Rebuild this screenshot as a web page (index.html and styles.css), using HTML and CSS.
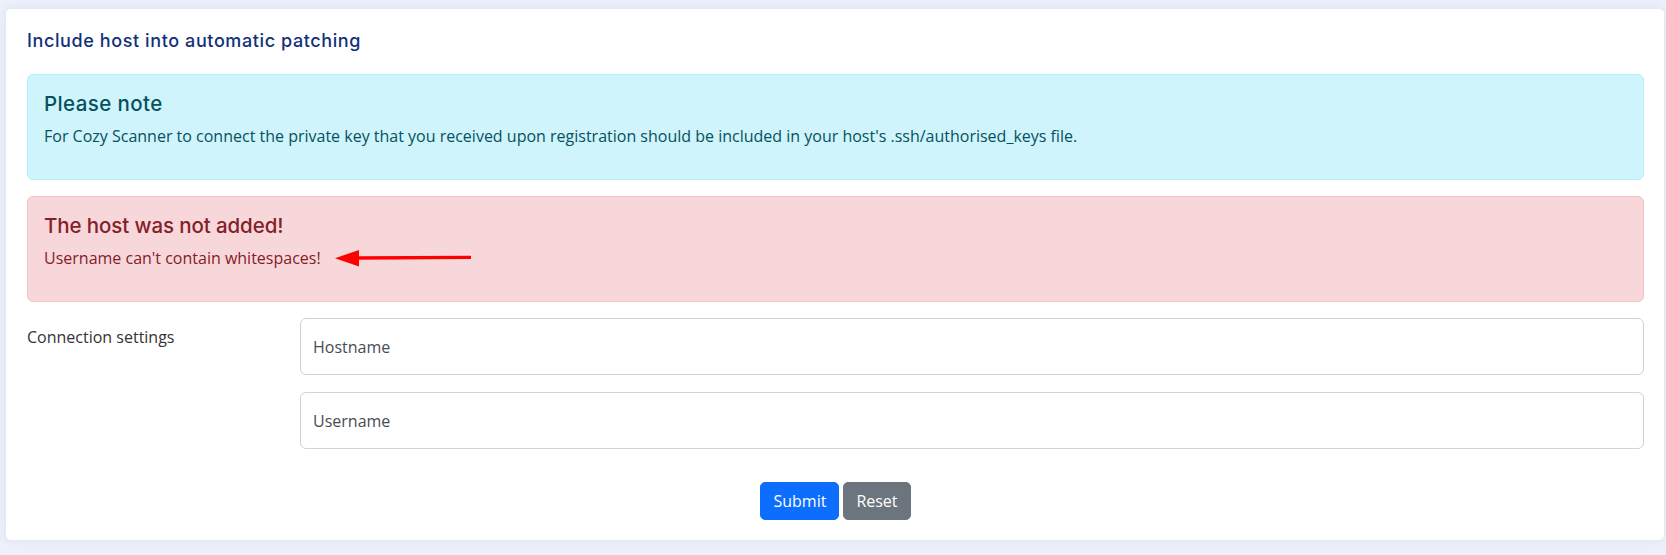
FILE: index.html
```html
<!DOCTYPE html>
<html lang="en">
<head>
<meta charset="utf-8">
<title>Include host into automatic patching</title>
<link rel="stylesheet" href="styles.css">
</head>
<body>
<div class="page">
  <div class="card">
    <h2 class="card-title">Include host into automatic patching</h2>
    <div class="alert alert-info">
      <h5 class="alert-heading">Please note</h5>
      <p class="alert-text">For Cozy Scanner to connect the private key that you received upon registration should be included in your host's .ssh/authorised_keys file.</p>
    </div>
    <div class="alert alert-danger">
      <h5 class="alert-heading">The host was not added!</h5>
      <p class="alert-text">Username can't contain whitespaces!<svg class="arrow" width="136" height="18" viewBox="0 0 136 18"><line x1="20" y1="9" x2="136" y2="8.4" stroke="#ff0000" stroke-width="3.4"/><polygon points="0,9.2 24,1 24,17.4" fill="#ff0000"/></svg></p>
    </div>
    <form class="form-row">
      <label class="form-label">Connection settings</label>
      <div class="fields">
        <input class="form-control" type="text" placeholder="Hostname">
        <input class="form-control" type="text" placeholder="Username">
      </div>
    </form>
    <div class="actions">
      <button class="btn btn-primary" type="button">Submit</button>
      <button class="btn btn-secondary" type="button">Reset</button>
    </div>
  </div>
</div>
</body>
</html>
```

FILE: styles.css
```css
html, body {
  margin: 0;
  padding: 0;
}
body {
  background: #edf1fa;
  font-family: "Open Sans", "Liberation Sans", sans-serif;
  color: #212529;
  height: 555px;
  overflow: hidden;
}
.page {
  padding: 9px 2px 0 6px;
}
.card {
  background: #ffffff;
  border-radius: 5px;
  padding: 20px 20px 20px 21px;
  box-shadow: 0 0 12px rgba(160, 175, 215, 0.25);
}
.card-title {
  font-family: "Inter", "Noto Sans", sans-serif;
  font-weight: 500;
  font-size: 18px;
  line-height: 20px;
  color: #12317a;
  margin: 2px 0 23px 0;
  letter-spacing: 0.6px;
}
.alert {
  border: 1px solid transparent;
  border-radius: 6px;
  padding: 16px 16px 16px 16px;
  margin-bottom: 16px;
}
.alert-info {
  background: #cff4fc;
  border-color: #b6effb;
  color: #055160;
}
.alert-danger {
  background: #f8d7da;
  border-color: #f5c2c7;
  color: #842029;
  margin-bottom: 16px;
}
.alert-heading {
  font-family: "Inter", "Noto Sans", sans-serif;
  font-weight: 500;
  font-size: 20.5px;
  line-height: 26px;
  margin: 0 0 8px 0;
}
.alert-danger .alert-heading {
  letter-spacing: -0.1px;
}
.alert-info .alert-heading {
  letter-spacing: 0.4px;
}
.alert-text {
  font-size: 16px;
  line-height: 22px;
  margin: 0 0 16px 0;
}
.arrow {
  vertical-align: -3px;
  margin-left: 14px;
}
.form-row {
  display: grid;
  grid-template-columns: 273px 1fr;
  margin: 0;
}
.form-label {
  font-size: 16px;
  line-height: 24px;
  color: #333;
  padding-top: 7px;
}
.fields {
  display: flex;
  flex-direction: column;
  gap: 17px;
}
.form-control {
  display: block;
  box-sizing: border-box;
  width: 100%;
  height: 57px;
  padding: 0 12px;
  font-family: "Open Sans", "Liberation Sans", sans-serif;
  font-size: 16px;
  color: #212529;
  background: #fff;
  border: 1px solid #ced4da;
  border-radius: 6px;
  margin: 0;
}
.form-control::placeholder {
  color: #474c51;
  opacity: 1;
}
.actions {
  display: flex;
  justify-content: center;
  gap: 4px;
  margin-top: 33px;
}
.btn {
  font-family: "Open Sans", "Liberation Sans", sans-serif;
  font-size: 16px;
  line-height: 24px;
  height: 38px;
  padding: 0 12px;
  border: 1px solid transparent;
  border-radius: 5px;
  color: #fff;
  cursor: pointer;
}
.btn-primary {
  background: #0d6efd;
  border-color: #0d6efd;
}
.btn-secondary {
  background: #6c757d;
  border-color: #6c757d;
}
```
